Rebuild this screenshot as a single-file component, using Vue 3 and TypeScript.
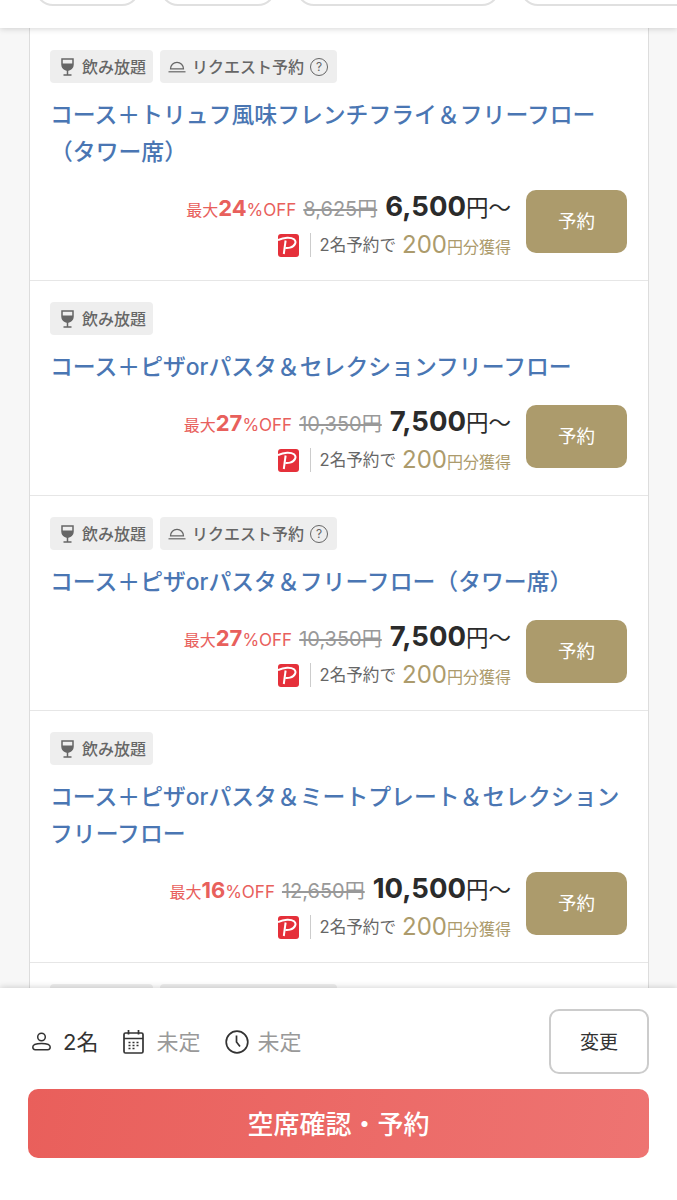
<script setup lang="ts">
interface Course {
  title: string;
  request: boolean;
  rate: string;
  listPrice: string;
  price: string;
}

const courses: Course[] = [
  { title: "コース＋トリュフ風味フレンチフライ＆フリーフロー（タワー席）", request: true, rate: "24", listPrice: "8,625円", price: "6,500" },
  { title: "コース＋ピザorパスタ＆セレクションフリーフロー", request: false, rate: "27", listPrice: "10,350円", price: "7,500" },
  { title: "コース＋ピザorパスタ＆フリーフロー（タワー席）", request: true, rate: "27", listPrice: "10,350円", price: "7,500" },
  { title: "コース＋ピザorパスタ＆ミートプレート＆セレクションフリーフロー", request: false, rate: "16", listPrice: "12,650円", price: "10,500" },
];
</script>

<template>
  <div class="page">
    <header class="top-bar">
      <span class="chip chip-a"></span>
      <span class="chip chip-b"></span>
      <span class="chip chip-c"></span>
      <span class="chip chip-d"></span>
    </header>

    <main class="list">
      <article v-for="course in courses" :key="course.title" class="course">
        <div class="tags">
          <span class="tag tag-drink">
            <svg class="glass" width="13" height="18" viewBox="0 0 13 18">
              <path d="M1 1h11v5.700a5.500 5.500 0 0 1-11 0z" fill="none" stroke="#666" stroke-width="1.500" />
              <path d="M1 5.500h11v1.200a5.500 5.500 0 0 1-11 0z" fill="#666" />
              <path d="M6.500 12v5M2.500 17h8" stroke="#666" stroke-width="1.500" fill="none" />
            </svg>
            飲み放題
          </span>
          <span v-if="course.request" class="tag tag-request">
            <svg class="dish" width="18" height="13" viewBox="0 0 18 13">
              <path d="M2.500 8.800a6.500 6.500 0 0 1 13 0z" fill="none" stroke="#666" stroke-width="1.200" />
              <path d="M.5 11.800h17" stroke="#666" stroke-width="1.200" />
            </svg>
            リクエスト予約
            <span class="help">?</span>
          </span>
        </div>

        <h2 class="title">{{ course.title }}</h2>

        <div class="buy">
          <div class="prices">
            <div class="price-line">
              <span class="off"><small>最大</small><b>{{ course.rate }}</b>%OFF</span>
              <s class="list-price">{{ course.listPrice }}</s>
              <span class="price"><b>{{ course.price }}</b>円〜</span>
            </div>
            <div class="point-line">
              <svg class="paypay" width="21" height="23" viewBox="0 0 21 23">
                <rect width="21" height="23" rx="3" fill="#e5303a" />
                <path d="M0 6.200C6 3 13 3 16 5.200c3 2.400 1.200 7-4 8.400-2 .5-3.400.5-4.600.3" fill="none" stroke="#fff" stroke-width="2" />
                <path d="M7.600 6.500 5.800 20" fill="none" stroke="#fff" stroke-width="2" />
              </svg>
              <span class="sep"></span>
              <span class="point-text">2名予約で</span>
              <span class="point"><em>200</em>円分獲得</span>
            </div>
          </div>
          <button class="reserve" type="button">予約</button>
        </div>
      </article>

      <!-- 下部バーの裏に隠れる次の行 -->
      <article class="course">
        <div class="tags">
          <span class="tag tail-a"></span>
          <span class="tag tail-b"></span>
        </div>
      </article>
    </main>

    <footer class="bottom">
      <div class="cond-row">
        <div class="conds">
          <span class="cond">
            <svg width="19" height="19" viewBox="0 0 19 19">
              <circle cx="9.500" cy="5" r="3.800" fill="none" stroke="#333" stroke-width="1.500" />
              <path d="M.8 15c0-2.400 3.600-3.500 8.700-3.500s8.700 1.100 8.700 3.500c0 1.700-.8 2.700-2.500 2.700H3.300C1.600 17.700.8 16.700.8 15z" fill="none" stroke="#333" stroke-width="1.500" />
            </svg>
            <span class="cond-text">2名</span>
          </span>
          <span class="cond">
            <svg width="21" height="24" viewBox="0 0 21 24">
              <rect x="1" y="3" width="19" height="20" rx="1.500" fill="none" stroke="#333" stroke-width="1.700" />
              <path d="M1 8.500h19M5.500 0v4.500M15.500 0v4.500" stroke="#333" stroke-width="1.700" fill="none" />
              <path d="M5.500 12.500h2M9.500 12.500h2M13.500 12.500h2M5.500 15.500h2M9.500 15.500h2M13.500 15.500h2M5.500 18.500h2M9.500 18.500h2" stroke="#333" stroke-width="1.600" fill="none" />
            </svg>
            <span class="cond-text muted">未定</span>
          </span>
          <span class="cond cond-time">
            <svg width="24" height="24" viewBox="0 0 24 24">
              <circle cx="12" cy="12" r="10.800" fill="none" stroke="#333" stroke-width="1.700" />
              <path d="M11.500 5.500v6.500l3.500 4.500" fill="none" stroke="#333" stroke-width="1.700" />
            </svg>
            <span class="cond-text muted">未定</span>
          </span>
        </div>
        <button class="change" type="button">変更</button>
      </div>
      <button class="confirm" type="button">空席確認・予約</button>
    </footer>
  </div>
</template>

<style scoped>
.page {
  position: relative;
  display: flex;
  flex-direction: column;
  height: 1200px;
  overflow: hidden;
  background: #f7f7f7;
  font-family: Inter, "Noto Sans CJK JP", sans-serif;
}

.top-bar {
  position: relative;
  z-index: 2;
  flex: none;
  display: flex;
  gap: 20px;
  height: 28px;
  padding-left: 35px;
  background: #fff;
  box-shadow: 0 1px 6px rgba(0, 0, 0, 0.16);
  overflow: hidden;
}

.chip {
  flex: none;
  height: 36px;
  margin-top: -30px;
  border: 2px solid #e0e0e0;
  border-radius: 20px;
  box-sizing: border-box;
}

.chip-a { width: 105px; }
.chip-b { width: 116px; }
.chip-c { width: 204px; }
.chip-d { width: 200px; }

.list {
  flex: none;
  box-sizing: border-box;
  width: 620px;
  margin-left: 29px;
  padding-top: 1px;
  background: #fff;
  border-left: 1px solid #ddd;
  border-right: 1px solid #ddd;
}

.course {
  padding: 21px 21px 27px 20px;
  border-bottom: 1px solid #e6e6e6;
}

.tags {
  display: flex;
  gap: 7px;
}

.tag {
  display: flex;
  align-items: center;
  box-sizing: border-box;
  height: 33px;
  border-radius: 4px;
  background: #eee;
  color: #666;
  font-size: 16px;
  font-weight: 500;
  line-height: 1;
}

.tag-drink {
  padding: 0 7px 0 11px;
}

.tag-request {
  padding: 0 9px 0 8px;
}

.tail-a { width: 103px; }
.tail-b { width: 177px; }

.glass {
  margin-right: 8px;
}

.dish {
  margin-right: 6px;
}

.help {
  display: flex;
  align-items: center;
  justify-content: center;
  box-sizing: border-box;
  width: 18px;
  height: 18px;
  margin-left: 6px;
  border: 1px solid #666;
  border-radius: 50%;
  font-size: 12px;
  font-weight: 400;
}

.title {
  margin: 14px 0 19px;
  color: #4a76b3;
  font-size: 22.84px;
  font-weight: 500;
  line-height: 37px;
}

.buy {
  display: flex;
  justify-content: flex-end;
  gap: 15px;
}

.prices {
  display: flex;
  flex-direction: column;
  align-items: flex-end;
  justify-content: space-between;
  height: 63px;
  line-height: 1;
}

.price-line {
  display: flex;
  align-items: baseline;
  padding-top: 3px;
  color: #2b2b2b;
}

.off {
  color: #e8605c;
  font-size: 17px;
}

.off small {
  font-size: 16px;
}

.off b {
  font-size: 22px;
  font-weight: 700;
}

.list-price {
  margin-left: 7px;
  color: #999;
  font-size: 20px;
}

.price {
  margin-left: 8px;
  font-size: 22.500px;
}

.price b {
  font-size: 27.500px;
  font-weight: 700;
}

.point-line {
  display: flex;
  align-items: center;
  height: 26px;
  margin-bottom: -5px;
  color: #666;
  font-size: 16px;
}

.sep {
  width: 1px;
  height: 24px;
  margin: 0 9px 0 11px;
  background: #ccc;
}

.point-text {
  font-size: 16.600px;
}

.point {
  margin-left: 6px;
  color: #ac9b6c;
}

.point em {
  font-size: 24px;
  font-style: normal;
}

.reserve {
  flex: none;
  width: 101px;
  height: 63px;
  padding: 0 0 3px;
  border: 0;
  border-radius: 10px;
  background: #ac9b6c;
  color: #fff;
  font: inherit;
  font-size: 18.500px;
}

.bottom {
  position: absolute;
  z-index: 3;
  top: 988px;
  left: 0;
  right: 0;
  bottom: 0;
  display: flex;
  flex-direction: column;
  padding: 21px 28px 0;
  background: #fff;
  box-shadow: 0 -1px 6px rgba(0, 0, 0, 0.16);
}

.cond-row {
  display: flex;
  align-items: center;
  justify-content: space-between;
}

.conds {
  display: flex;
  gap: 25px;
  padding-left: 4px;
}

.cond {
  display: flex;
  align-items: center;
  gap: 12px;
}

.cond-time {
  gap: 8px;
}

.cond-text {
  color: #333;
  font-size: 22px;
  line-height: 24px;
  padding-top: 1px;
}

.muted {
  color: #999;
}

.change {
  box-sizing: border-box;
  width: 100px;
  height: 65px;
  padding: 0 0 3px;
  border: 2px solid #ccc;
  border-radius: 10px;
  background: #fff;
  color: #333;
  font: inherit;
  font-size: 19px;
}

.confirm {
  width: 621px;
  height: 69px;
  margin-top: 15px;
  padding: 0 0 3px;
  border: 0;
  border-radius: 10px;
  background: linear-gradient(100deg, #e95f5b, #ee7472);
  color: #fff;
  font: inherit;
  font-size: 26px;
  font-weight: 500;
}
</style>
